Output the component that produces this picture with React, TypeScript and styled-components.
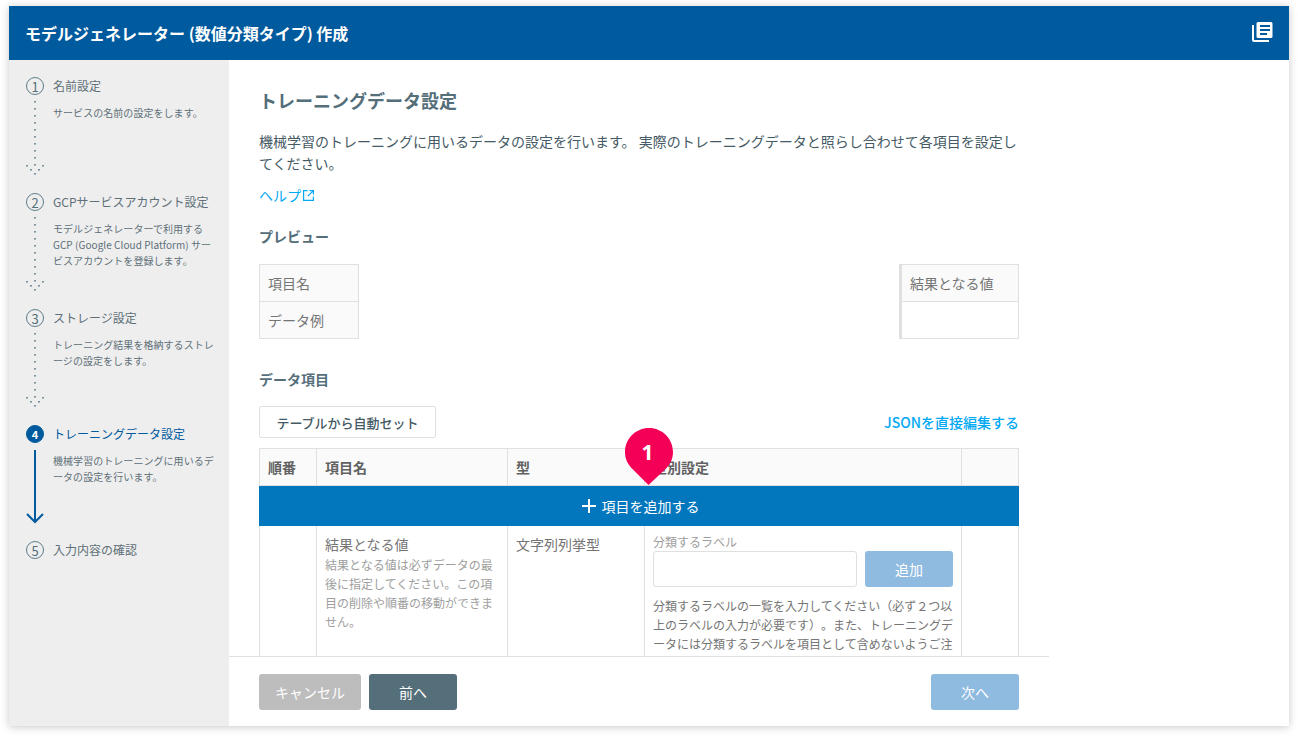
import React from "react";
import styled, { createGlobalStyle } from "styled-components";

const Global = createGlobalStyle`
  html, body { margin: 0; padding: 0; background: #fff; }
  body { font-family: "Noto Sans CJK JP", "Noto Sans", sans-serif; color: #455a64; text-spacing-trim: space-all; }
  * { box-sizing: border-box; }
`;

const Page = styled.div`
  width: 1298px;
  height: 738px;
  padding: 6px 9px 12px;
  overflow: hidden;
`;
const Win = styled.div`
  width: 1280px;
  height: 720px;
  display: flex;
  flex-direction: column;
  background: #fff;
  box-shadow: 0 1px 8px rgba(0, 0, 0, 0.22);
`;
const Header = styled.header`
  height: 54px;
  flex: none;
  background: #005a9e;
  display: flex;
  align-items: center;
  justify-content: space-between;
  padding: 0 16px 0 16px;
  color: #fff;
`;
const Title = styled.h1`
  margin: 0;
  font-size: 16px;
  font-weight: 700;
  line-height: 22px;
`;
const Body = styled.div`
  flex: 1;
  display: flex;
  min-height: 0;
`;
const Side = styled.nav`
  width: 220px;
  flex: none;
  background: #eeeeee;
  padding: 16px 0 0 17px;
`;
const Step = styled.div`
  height: 116px;
  display: grid;
  grid-template-columns: 18px 1fr;
  grid-template-rows: 20px 1fr;
  column-gap: 9px;
`;
const Num = styled.span<{ $on?: boolean }>`
  width: 18px;
  height: 18px;
  margin-top: 1px;
  border-radius: 50%;
  border: 1px solid ${(p) => (p.$on ? "#005a9e" : "#607d8b")};
  background: ${(p) => (p.$on ? "#005a9e" : "transparent")};
  color: ${(p) => (p.$on ? "#fff" : "#546e7a")};
  font-size: ${(p) => (p.$on ? "11px" : "13px")};
  font-weight: ${(p) => (p.$on ? 700 : 400)};
  display: flex;
  align-items: center;
  justify-content: center;
  line-height: 1;
`;
const StepName = styled.div<{ $on?: boolean }>`
  font-size: 12px;
  line-height: 20px;
  color: ${(p) => (p.$on ? "#005a9e" : "#607078")};
`;
const Track = styled.div`
  width: 18px;
  height: 96px;
`;
const StepDesc = styled.p`
  margin: 9px 0 0;
  width: 164px;
  font-size: 10px;
  line-height: 16px;
  color: #607078;
  letter-spacing: 0.05px;
`;
const Main = styled.main`
  width: 820px;
  flex: none;
  display: flex;
  flex-direction: column;
  min-height: 0;
`;
const Content = styled.div`
  flex: 1;
  min-height: 0;
  overflow: hidden;
  padding: 27px 30px 0;
`;
const H2 = styled.h2`
  margin: 0;
  font-size: 18px;
  line-height: 26px;
  font-weight: 700;
  color: #546e7a;
`;
const Lead = styled.p`
  margin: 17px 0 0;
  font-size: 14px;
  line-height: 22px;
  color: #455a64;
`;
const Help = styled.a`
  margin-top: 10px;
  height: 22px;
  display: flex;
  align-items: center;
  gap: 1px;
  font-size: 14px;
  color: #03a9f4;
`;
const H3 = styled.h3<{ $gap: number }>`
  margin: ${(p) => p.$gap}px 0 0;
  font-size: 14px;
  line-height: 22px;
  font-weight: 700;
  color: #546e7a;
`;
const Preview = styled.div`
  margin-top: 17px;
  display: flex;
  justify-content: space-between;
`;
const PreviewTable = styled.div<{ $w: number; $mark?: boolean }>`
  width: ${(p) => p.$w}px;
  border: 1px solid #e0e0e0;
  border-left-width: ${(p) => (p.$mark ? "3px" : "1px")};
  background: #fafafa;
`;
const PreviewCell = styled.div<{ $blank?: boolean }>`
  height: 36px;
  padding: 0 8px;
  display: flex;
  align-items: center;
  font-size: 14px;
  color: #757575;
  background: ${(p) => (p.$blank ? "#fff" : "#fafafa")};
  & + & {
    border-top: 1px solid #e0e0e0;
    height: 37px;
  }
`;
const Bar = styled.div`
  margin-top: 16px;
  height: 32px;
  display: flex;
  align-items: center;
  justify-content: space-between;
`;
const GhostBtn = styled.button`
  width: 177px;
  height: 32px;
  padding: 0;
  background: #fff;
  border: 1px solid #e0e0e0;
  border-radius: 2px;
  font: 500 13px "Noto Sans CJK JP", sans-serif;
  color: #455a64;
`;
const JsonLink = styled.a`
  font-size: 14px;
  font-weight: 500;
  color: #03a9f4;
`;
const TableWrap = styled.div`
  position: relative;
  margin-top: 10px;
`;
const Row = styled.div`
  display: grid;
  grid-template-columns: 58px 191px 137px 317px 57px;
`;
const Th = styled.div`
  height: 38px;
  background: #fafafa;
  border: 1px solid #e0e0e0;
  border-left-width: 0;
  padding: 0 8px;
  display: flex;
  align-items: center;
  font-size: 14px;
  font-weight: 700;
  color: #616161;
  &:first-child {
    border-left-width: 1px;
  }
`;
const Td = styled.div`
  height: 200px;
  border-right: 1px solid #e0e0e0;
  padding: 8px;
  &:first-child {
    border-left: 1px solid #e0e0e0;
  }
`;
const AddBar = styled.div`
  height: 40px;
  padding-left: 3px;
  background: #0277bd;
  display: flex;
  align-items: center;
  justify-content: center;
  gap: 6px;
  color: #fff;
  font-size: 14px;
`;
const CellName = styled.div`
  font-size: 14px;
  line-height: 22px;
  color: #757575;
  margin-top: -1px;
`;
const CellNote = styled.div`
  font-size: 12px;
  line-height: 19px;
  color: #9e9e9e;
`;
const TypeText = styled.div`
  font-size: 14px;
  line-height: 22px;
  color: #757575;
  margin-top: -1px;
`;
const FieldLabel = styled.div`
  font-size: 12px;
  line-height: 16px;
  color: #9e9e9e;
`;
const FieldRow = styled.div`
  display: flex;
  justify-content: space-between;
  margin-top: 1px;
`;
const Input = styled.div`
  width: 204px;
  height: 36px;
  border: 1px solid #e0e0e0;
  border-radius: 3px;
  background: #fff;
`;
const Button = styled.button<{ $w: number; $bg: string }>`
  width: ${(p) => p.$w}px;
  height: 36px;
  padding: 0;
  border: 0;
  border-radius: 3px;
  background: ${(p) => p.$bg};
  color: #fff;
  font: 14px "Noto Sans CJK JP", sans-serif;
`;
const FieldHelp = styled.p`
  margin: 9px 0 0;
  font-size: 12px;
  line-height: 19px;
  color: #757575;
`;
const Pin = styled.div`
  position: absolute;
  left: 366px;
  top: -20px;
  width: 48px;
  height: 60px;
`;
const PinNum = styled.span`
  position: absolute;
  left: 0;
  right: 3px;
  top: 0;
  text-align: center;
  font-size: 21px;
  line-height: 48px;
  font-weight: 700;
  color: #fff;
  font-family: "Noto Sans", sans-serif;
`;
const Footer = styled.footer`
  height: 70px;
  flex: none;
  border-top: 1px solid #e0e0e0;
  background: #fff;
  padding: 17px 30px 0;
  display: flex;
  justify-content: space-between;
`;
const FooterLeft = styled.div`
  display: flex;
  gap: 8px;
`;

const arrowDots = [
  [0, 69],
  [16, 69],
  [4, 73],
  [12, 73],
  [8, 77],
];

const Dotted = () => (
  <Track>
    <svg width="18" height="96" viewBox="0 0 18 96" fill="#607d8b">
      {[0, 1, 2, 3, 4, 5, 6, 7, 8, 9].map((i) => (
        <rect key={i} x="8.2" y={5 + i * 7} width="1.6" height="1.6" />
      ))}
      {arrowDots.map(([x, y]) => (
        <rect key={`${x}-${y}`} x={x + 0.2} y={y} width="1.6" height="1.6" />
      ))}
    </svg>
  </Track>
);

const Solid = () => (
  <Track>
    <svg width="18" height="96" viewBox="0 0 18 96" fill="none" stroke="#005a9e" strokeWidth="2">
      <path d="M9 6 V77" />
      <path d="M1 70 L9 78 L17 70" />
    </svg>
  </Track>
);

const steps = [
  { n: "1", name: "名前設定", desc: "サービスの名前の設定をします。" },
  {
    n: "2",
    name: "GCPサービスアカウント設定",
    desc: "モデルジェネレーターで利用する GCP (Google Cloud Platform) サービスアカウントを登録します。",
  },
  { n: "3", name: "ストレージ設定", desc: "トレーニング結果を格納するストレージの設定をします。" },
  { n: "4", name: "トレーニングデータ設定", desc: "機械学習のトレーニングに用いるデータの設定を行います。", on: true },
  { n: "5", name: "入力内容の確認", last: true },
];

export default function App() {
  return (
    <>
      <Global />
      <Page>
        <Win>
          <Header>
            <Title>モデルジェネレーター (数値分類タイプ) 作成</Title>
            <svg width="22" height="22" viewBox="0 1 22 22">
              <path d="M1 4h2v15h15v2H3a2 2 0 0 1-2-2z" fill="#fff" />
              <path
                fillRule="evenodd"
                d="M7 1h13a1.500 1.500 0 0 1 1.500 1.500v13A1.500 1.500 0 0 1 20 17H7a1.500 1.500 0 0 1-1.500-1.500v-13A1.500 1.500 0 0 1 7 1zm2 3v2h10V4zm0 4v2h10V8zm0 4v2h7v-2z"
                fill="#fff"
              />
            </svg>
          </Header>
          <Body>
            <Side>
              {steps.map((s) => (
                <Step key={s.n}>
                  <Num $on={s.on}>{s.n}</Num>
                  <StepName $on={s.on}>{s.name}</StepName>
                  {!s.last && (s.on ? <Solid /> : <Dotted />)}
                  {s.desc && <StepDesc>{s.desc}</StepDesc>}
                </Step>
              ))}
            </Side>
            <Main>
              <Content>
                <H2>トレーニングデータ設定</H2>
                <Lead>
                  機械学習のトレーニングに用いるデータの設定を行います。 実際のトレーニングデータと照らし合わせて各項目を設定してください。
                </Lead>
                <Help>
                  ヘルプ
                  <svg width="13" height="13" viewBox="0 0 13 13" fill="none" stroke="#03a9f4" strokeWidth="1.2">
                    <path d="M5.500 1.600H1.600v9.800h9.800V7.500" />
                    <path d="M7.500 1.600h3.900v3.900M11.200 1.800 5.800 7.200" />
                  </svg>
                </Help>
                <H3 $gap={19}>プレビュー</H3>
                <Preview>
                  <PreviewTable $w={100}>
                    <PreviewCell>項目名</PreviewCell>
                    <PreviewCell>データ例</PreviewCell>
                  </PreviewTable>
                  <PreviewTable $w={120} $mark>
                    <PreviewCell>結果となる値</PreviewCell>
                    <PreviewCell $blank />
                  </PreviewTable>
                </Preview>
                <H3 $gap={29}>データ項目</H3>
                <Bar>
                  <GhostBtn>テーブルから自動セット</GhostBtn>
                  <JsonLink>JSONを直接編集する</JsonLink>
                </Bar>
                <TableWrap>
                  <Row>
                    <Th>順番</Th>
                    <Th>項目名</Th>
                    <Th>型</Th>
                    <Th>型別設定</Th>
                    <Th />
                  </Row>
                  <AddBar>
                    <svg width="14" height="14" viewBox="0 0 14 14" stroke="#fff" strokeWidth="2">
                      <path d="M7 0v14M0 7h14" />
                    </svg>
                    項目を追加する
                  </AddBar>
                  <Row>
                    <Td />
                    <Td>
                      <CellName>結果となる値</CellName>
                      <CellNote>結果となる値は必ずデータの最後に指定してください。この項目の削除や順番の移動ができません。</CellNote>
                    </Td>
                    <Td>
                      <TypeText>文字列列挙型</TypeText>
                    </Td>
                    <Td>
                      <FieldLabel>分類するラベル</FieldLabel>
                      <FieldRow>
                        <Input />
                        <Button $w={88} $bg="#90bbe0">追加</Button>
                      </FieldRow>
                      <FieldHelp>
                        分類するラベルの一覧を入力してください（必ず２つ以上のラベルの入力が必要です）。また、トレーニングデータには分類するラベルを項目として含めないようご注意ください。
                      </FieldHelp>
                    </Td>
                    <Td />
                  </Row>
                  <Pin>
                    <svg width="48" height="60" viewBox="0 0 48 60">
                      <path
                        d="M24 0C37.300 0 48 10.700 48 24c0 7-3 13-8 17.500L23.500 57 8 41.500C3 37 0 31 0 24 0 10.700 10.700 0 24 0z"
                        fill="#f50057"
                      />
                    </svg>
                    <PinNum>1</PinNum>
                  </Pin>
                </TableWrap>
              </Content>
              <Footer>
                <FooterLeft>
                  <Button $w={102} $bg="#bdbdbd">キャンセル</Button>
                  <Button $w={88} $bg="#546e7a">前へ</Button>
                </FooterLeft>
                <Button $w={88} $bg="#90bbe0">次へ</Button>
              </Footer>
            </Main>
          </Body>
        </Win>
      </Page>
    </>
  );
}
